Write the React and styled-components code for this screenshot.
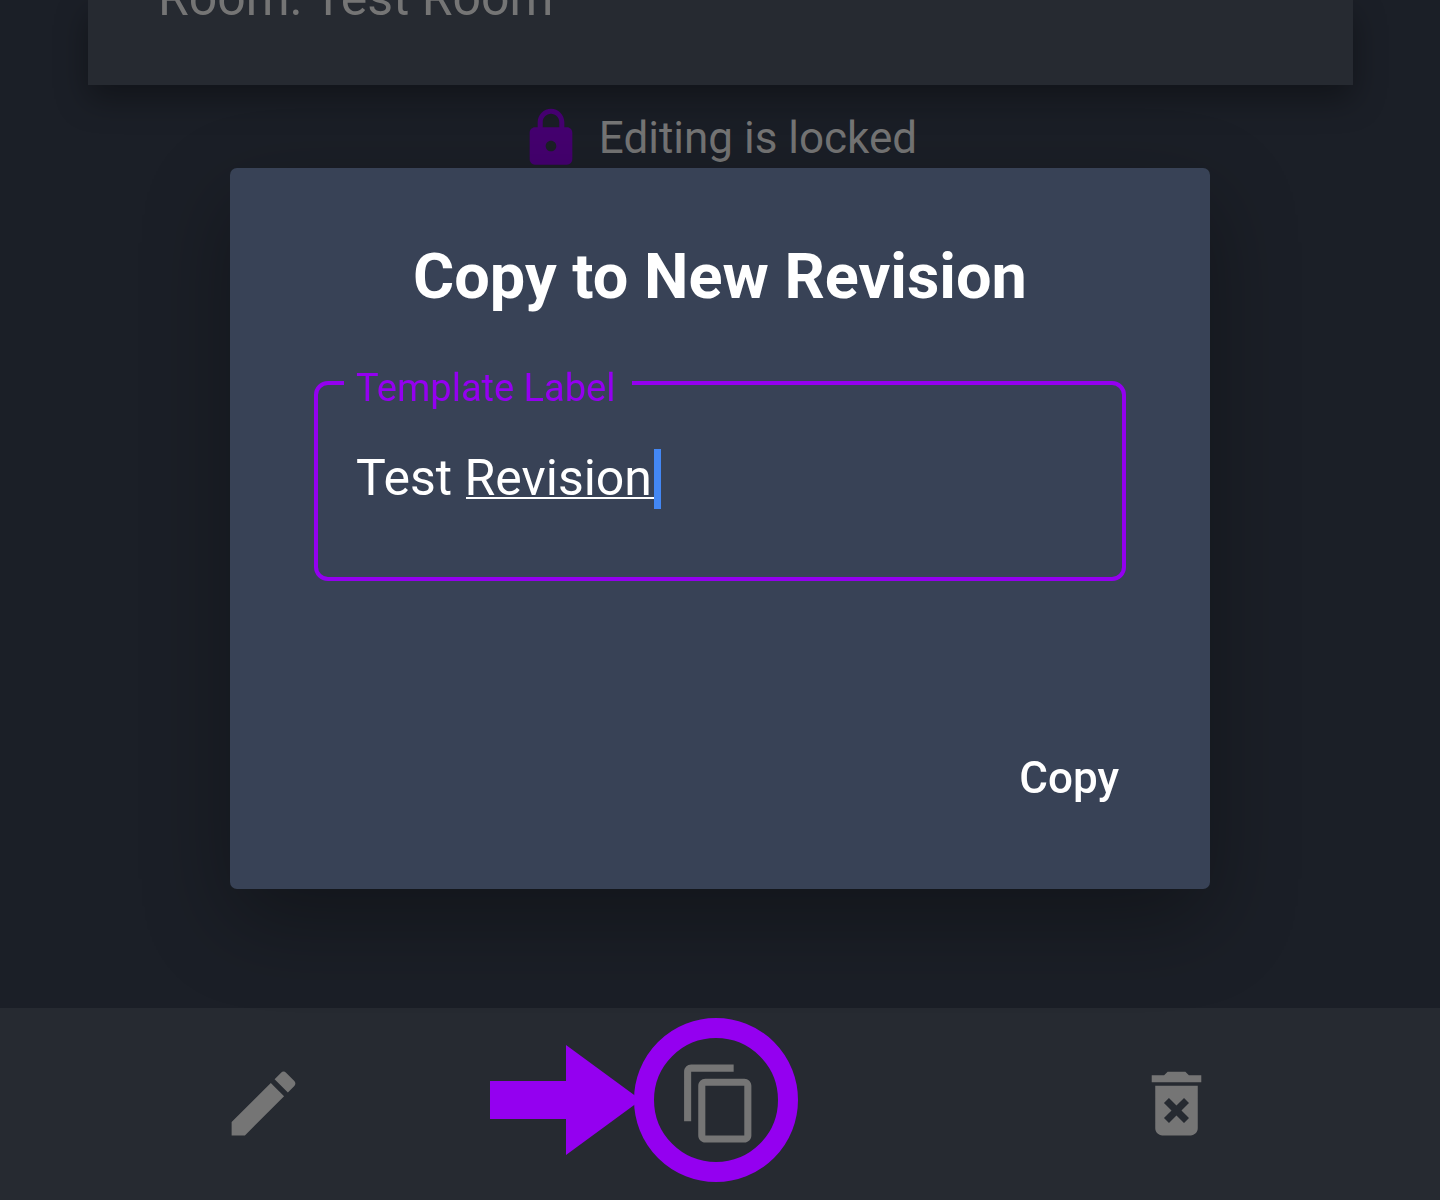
import React, { useState } from "react";
import styled, { createGlobalStyle } from "styled-components";

const color = {
  page: "#1b1f27",
  surface: "#262a31",
  dialog: "#384256",
  accent: "#9400f0",
  accentDim: "#450070",
  muted: "#757575",
  caret: "#4387f4",
};

const GlobalStyle = createGlobalStyle`
  *, *::before, *::after { box-sizing: border-box; }
  body {
    margin: 0;
    background: ${color.page};
    font-family: Roboto, "Noto Sans", sans-serif;
  }
`;

const Screen = styled.div`
  display: flex;
  flex-direction: column;
  min-height: 100vh;
  overflow: hidden;
`;

const RoomCard = styled.section`
  display: flex;
  align-items: flex-end;
  height: 85px;
  margin: 0 87px 0 88px;
  padding: 0 70px 57px;
  background: ${color.surface};
  box-shadow: 0 14px 32px rgba(0, 0, 0, 0.35);
`;

const RoomName = styled.p`
  margin: 0;
  color: ${color.muted};
  font-size: 50px;
  line-height: 60px;
  white-space: nowrap;
`;

const LockStatus = styled.div`
  display: flex;
  align-items: center;
  justify-content: center;
  gap: 16px;
  margin-top: 21px;
  padding-right: 4px;
  color: ${color.muted};
  font-size: 44px;
  line-height: 64px;
`;

const Icon = styled.svg`
  display: block;
  flex: none;
  width: ${(p) => p.$size}px;
  height: ${(p) => p.$size}px;
  fill: ${(p) => p.$color || color.muted};
`;

const Toolbar = styled.nav`
  display: grid;
  grid-template-columns: repeat(3, 1fr);
  justify-items: center;
  align-items: center;
  height: 192px;
  margin-top: auto;
  padding: 0 35px 2px;
  background: ${color.surface};
`;

const ToolButton = styled.button`
  position: relative;
  padding: 0;
  border: 0;
  background: none;
  cursor: pointer;
`;

const Pointer = styled.svg`
  position: absolute;
  right: -36px;
  top: 50%;
  width: 308px;
  height: 164px;
  margin-top: -85px;
  fill: ${color.accent};
  pointer-events: none;
`;

const Overlay = styled.div`
  position: fixed;
  inset: 0;
  display: flex;
  align-items: flex-start;
  justify-content: center;
  padding: 168px 24px 24px;
  pointer-events: none;
`;

const Dialog = styled.form`
  display: flex;
  flex-direction: column;
  width: 100%;
  max-width: 980px;
  padding: 71px 84px 79px;
  border-radius: 7px;
  background: ${color.dialog};
  box-shadow: 0 32px 88px rgba(0, 0, 0, 0.32);
  pointer-events: auto;
`;

const Title = styled.h1`
  margin: 0;
  color: #fff;
  font-size: 63px;
  font-weight: 700;
  line-height: 76px;
  text-align: center;
`;

const Field = styled.fieldset`
  min-width: 0;
  height: 216px;
  margin: 50px 0 0;
  padding: 0 38px;
  border: 4px solid ${color.accent};
  border-radius: 14px;
`;

const FieldLegend = styled.legend`
  margin-left: -12px;
  padding: 10px 17px 0 12px;
  color: ${color.accent};
  font-size: 38px;
  line-height: 26px;
`;

const Entry = styled.div`
  position: relative;
  margin-top: 48px;
`;

const TextBox = styled.input`
  display: block;
  width: 100%;
  height: 60px;
  padding: 0 0 2px;
  border: 0;
  outline: 0;
  background: none;
  color: #fff;
  font: 400 50px/58px Roboto, "Noto Sans", sans-serif;
  caret-color: ${color.caret};
`;

const Composing = styled.span`
  position: absolute;
  left: 110px;
  top: 48px;
  width: 188px;
  height: 2px;
  background: #fff;
  pointer-events: none;
`;

const Caret = styled.span`
  position: absolute;
  left: 298px;
  top: 0;
  width: 7px;
  height: 60px;
  background: ${color.caret};
  pointer-events: none;
`;

const Actions = styled.div`
  display: flex;
  justify-content: flex-end;
  margin-top: 165px;
`;

const CopyButton = styled.button`
  padding: 4px 7px;
  border: 0;
  background: none;
  color: #fff;
  font: 500 44px/56px Roboto, "Noto Sans", sans-serif;
  cursor: pointer;
`;

const paths = {
  lock: "M18 8h-1V6c0-2.76-2.24-5-5-5S7 3.24 7 6v2H6c-1.1 0-2 .9-2 2v10c0 1.1.9 2 2 2h12c1.1 0 2-.9 2-2V10c0-1.1-.9-2-2-2zm-6 9c-1.1 0-2-.9-2-2s.9-2 2-2 2 .9 2 2-.9 2-2 2zm3.1-9H8.9V6c0-1.71 1.39-3.1 3.1-3.1 1.71 0 3.1 1.39 3.1 3.1v2z",
  edit: "M3 17.25V21h3.75L17.81 9.94l-3.75-3.75L3 17.25zM20.71 7.04c.39-.39.39-1.02 0-1.41l-2.34-2.34c-.39-.39-1.02-.39-1.41 0l-1.83 1.83 3.75 3.75 1.83-1.83z",
  copy: "M16 1H4c-1.1 0-2 .9-2 2v14h2V3h12V1zm3 4H8c-1.1 0-2 .9-2 2v14c0 1.1.9 2 2 2h11c1.1 0 2-.9 2-2V7c0-1.1-.9-2-2-2zm0 16H8V7h11v14z",
  remove: "M6 19c0 1.1.9 2 2 2h8c1.1 0 2-.9 2-2V7H6v12zm2.46-7.12l1.41-1.41L12 12.59l2.12-2.12 1.41 1.41L13.41 14l2.12 2.12-1.41 1.41L12 15.41l-2.12 2.12-1.41-1.41L10.59 14l-2.13-2.12zM15.5 4l-1-1h-5l-1 1H5v2h14V4z",
};

function Glyph({ name, size, tint }) {
  return (
    <Icon $size={size} $color={tint} viewBox="0 0 24 24" aria-hidden="true">
      <path d={paths[name]} />
    </Icon>
  );
}

export default function App() {
  const [label, setLabel] = useState("Test Revision");
  const [composing, setComposing] = useState(true);

  const change = (event) => {
    setLabel(event.target.value);
    setComposing(false);
  };

  return (
    <>
      <GlobalStyle />
      <Screen>
        <RoomCard>
          <RoomName>Room: Test Room</RoomName>
        </RoomCard>
        <LockStatus>
          <Glyph name="lock" size={64} tint={color.accentDim} />
          <span>Editing is locked</span>
        </LockStatus>
        <Toolbar aria-label="Template actions">
          <ToolButton type="button" aria-label="Edit">
            <Glyph name="edit" size={85} />
          </ToolButton>
          <ToolButton type="button" aria-label="Copy to new revision">
            <Glyph name="copy" size={85} />
            <Pointer viewBox="0 0 308 164" aria-hidden="true">
              <path d="M0 63H76V27L151 82L76 137V101H0Z" />
              <circle cx="226" cy="82" r="72" fill="none" stroke={color.accent} strokeWidth="20" />
            </Pointer>
          </ToolButton>
          <ToolButton type="button" aria-label="Delete">
            <Glyph name="remove" size={85} />
          </ToolButton>
        </Toolbar>
      </Screen>
      <Overlay>
        <Dialog role="dialog" aria-labelledby="dialog-title" onSubmit={(e) => e.preventDefault()}>
          <Title id="dialog-title">Copy to New Revision</Title>
          <Field>
            <FieldLegend>
              <label htmlFor="template-label">Template Label</label>
            </FieldLegend>
            <Entry>
              <TextBox
                id="template-label"
                type="text"
                spellCheck={false}
                value={label}
                onChange={change}
              />
              {composing && <Composing />}
              {composing && <Caret />}
            </Entry>
          </Field>
          <Actions>
            <CopyButton type="submit">Copy</CopyButton>
          </Actions>
        </Dialog>
      </Overlay>
    </>
  );
}
